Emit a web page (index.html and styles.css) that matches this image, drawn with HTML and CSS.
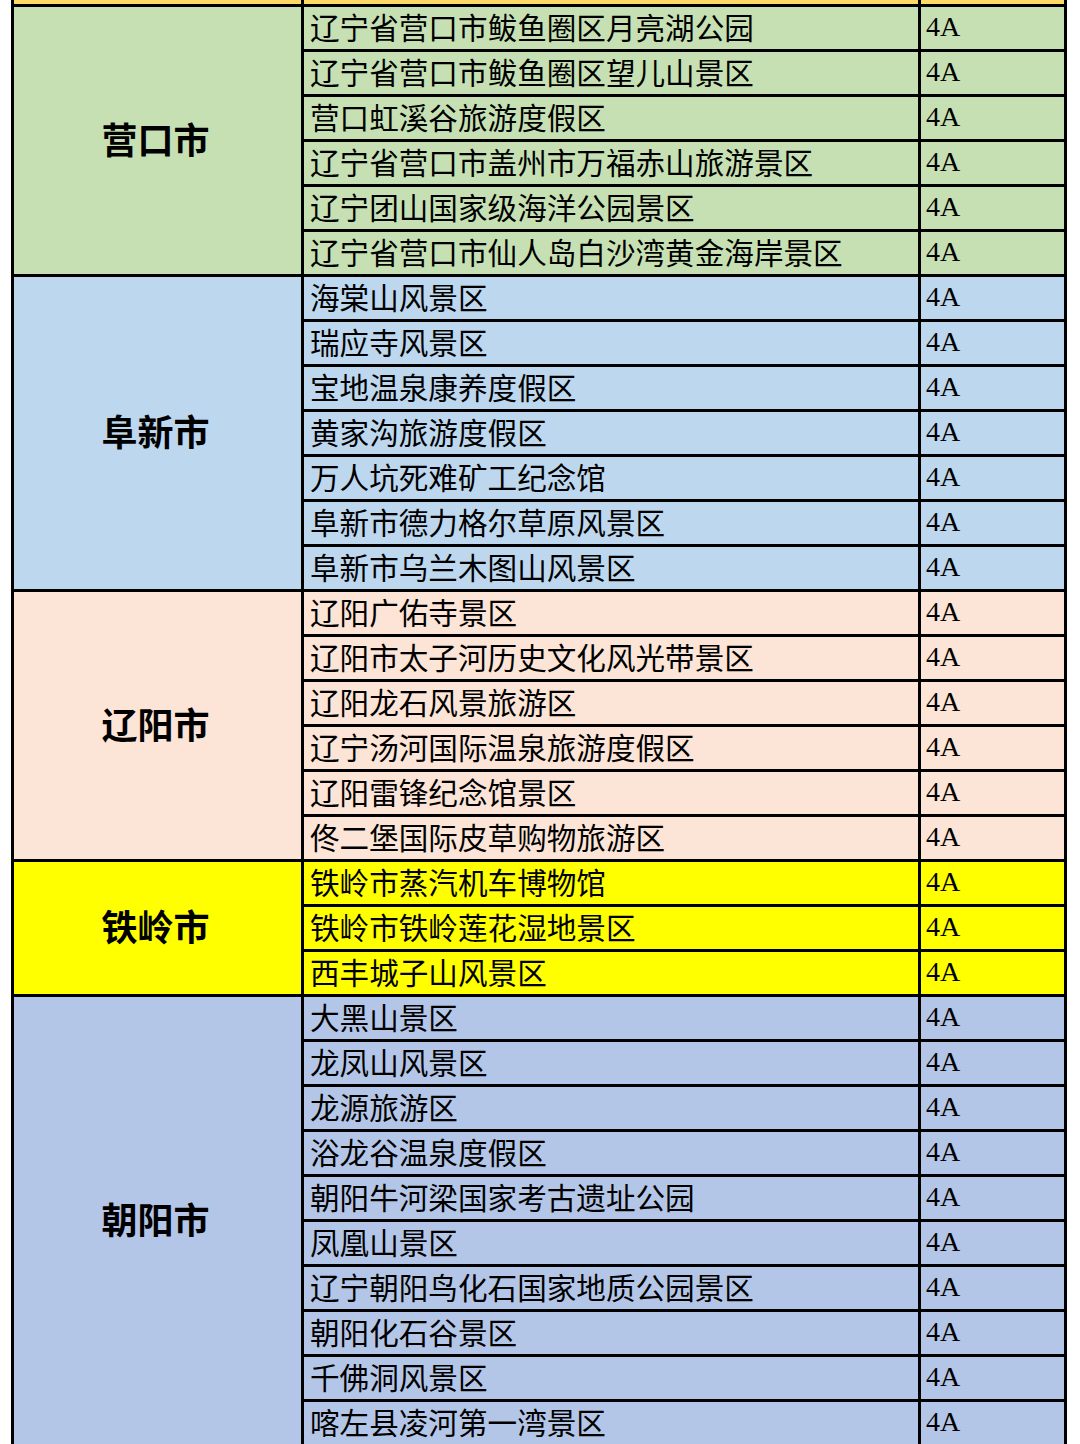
FILE: index.html
```html
<!DOCTYPE html>
<html lang="zh-CN">
<head>
<meta charset="utf-8">
<title>辽宁4A景区</title>
<link rel="stylesheet" href="styles.css">
</head>
<body>
<div class="sheet">
  <div class="cell gold c1"></div><div class="cell gold c2"></div><div class="cell gold c3"></div>

  <div class="cell city green span6">营口市</div>
  <div class="cell name green">辽宁省营口市鲅鱼圈区月亮湖公园</div><div class="cell grade green">4A</div>
  <div class="cell name green">辽宁省营口市鲅鱼圈区望儿山景区</div><div class="cell grade green">4A</div>
  <div class="cell name green">营口虹溪谷旅游度假区</div><div class="cell grade green">4A</div>
  <div class="cell name green">辽宁省营口市盖州市万福赤山旅游景区</div><div class="cell grade green">4A</div>
  <div class="cell name green">辽宁团山国家级海洋公园景区</div><div class="cell grade green">4A</div>
  <div class="cell name green">辽宁省营口市仙人岛白沙湾黄金海岸景区</div><div class="cell grade green">4A</div>

  <div class="cell city blue span7">阜新市</div>
  <div class="cell name blue">海棠山风景区</div><div class="cell grade blue">4A</div>
  <div class="cell name blue">瑞应寺风景区</div><div class="cell grade blue">4A</div>
  <div class="cell name blue">宝地温泉康养度假区</div><div class="cell grade blue">4A</div>
  <div class="cell name blue">黄家沟旅游度假区</div><div class="cell grade blue">4A</div>
  <div class="cell name blue">万人坑死难矿工纪念馆</div><div class="cell grade blue">4A</div>
  <div class="cell name blue">阜新市德力格尔草原风景区</div><div class="cell grade blue">4A</div>
  <div class="cell name blue">阜新市乌兰木图山风景区</div><div class="cell grade blue">4A</div>

  <div class="cell city peach span6">辽阳市</div>
  <div class="cell name peach">辽阳广佑寺景区</div><div class="cell grade peach">4A</div>
  <div class="cell name peach">辽阳市太子河历史文化风光带景区</div><div class="cell grade peach">4A</div>
  <div class="cell name peach">辽阳龙石风景旅游区</div><div class="cell grade peach">4A</div>
  <div class="cell name peach">辽宁汤河国际温泉旅游度假区</div><div class="cell grade peach">4A</div>
  <div class="cell name peach">辽阳雷锋纪念馆景区</div><div class="cell grade peach">4A</div>
  <div class="cell name peach">佟二堡国际皮草购物旅游区</div><div class="cell grade peach">4A</div>

  <div class="cell city yellow span3">铁岭市</div>
  <div class="cell name yellow">铁岭市蒸汽机车博物馆</div><div class="cell grade yellow">4A</div>
  <div class="cell name yellow">铁岭市铁岭莲花湿地景区</div><div class="cell grade yellow">4A</div>
  <div class="cell name yellow">西丰城子山风景区</div><div class="cell grade yellow">4A</div>

  <div class="cell city lavender span10">朝阳市</div>
  <div class="cell name lavender">大黑山景区</div><div class="cell grade lavender">4A</div>
  <div class="cell name lavender">龙凤山风景区</div><div class="cell grade lavender">4A</div>
  <div class="cell name lavender">龙源旅游区</div><div class="cell grade lavender">4A</div>
  <div class="cell name lavender">浴龙谷温泉度假区</div><div class="cell grade lavender">4A</div>
  <div class="cell name lavender">朝阳牛河梁国家考古遗址公园</div><div class="cell grade lavender">4A</div>
  <div class="cell name lavender">凤凰山景区</div><div class="cell grade lavender">4A</div>
  <div class="cell name lavender">辽宁朝阳鸟化石国家地质公园景区</div><div class="cell grade lavender">4A</div>
  <div class="cell name lavender">朝阳化石谷景区</div><div class="cell grade lavender">4A</div>
  <div class="cell name lavender">千佛洞风景区</div><div class="cell grade lavender">4A</div>
  <div class="cell name lavender">喀左县凌河第一湾景区</div><div class="cell grade lavender">4A</div>
</div>
</body>
</html>
```

FILE: styles.css
```css
html {
  overflow: hidden;
  background: #ffffff;
}

body {
  margin: 0;
  background: #ffffff;
  font-family: "Noto Sans CJK SC", "Noto Sans", sans-serif;
  color: #000000;
}

.sheet {
  display: grid;
  width: 1056px;
  margin-left: 11px;
  padding: 0 3px 3px 3px;
  box-sizing: border-box;
  background: #000000;
  grid-template-columns: 287px 614px 143px;
  grid-template-rows: 4px repeat(32, 42px);
  column-gap: 3px;
  row-gap: 3px;
}

.cell {
  display: flex;
  align-items: center;
  min-width: 0;
  white-space: nowrap;
  box-sizing: border-box;
  line-height: 1.15;
}

.c1 { grid-column: 1; grid-row: 1; }
.c2 { grid-column: 2; grid-row: 1; }
.c3 { grid-column: 3; grid-row: 1; }

.city {
  grid-column: 1;
  justify-content: center;
  font-size: 36px;
  font-weight: 700;
  padding-right: 4px;
  padding-bottom: 4px;
}

.span3 { grid-row: span 3; }
.span6 { grid-row: span 6; }
.span7 { grid-row: span 7; }
.span10 { grid-row: span 10; }

.name {
  grid-column: 2;
  font-size: 29.6px;
  padding-left: 6px;
  padding-bottom: 1px;
}

.grade {
  grid-column: 3;
  font-family: "Liberation Serif", "Times New Roman", serif;
  font-size: 28px;
  padding-left: 5px;
  padding-bottom: 2px;
}

.gold { background: #ffd966; }
.green { background: #c6e0b4; }
.blue { background: #bdd7ee; }
.peach { background: #fce4d6; }
.yellow { background: #ffff00; }
.lavender { background: #b4c6e7; }
```
